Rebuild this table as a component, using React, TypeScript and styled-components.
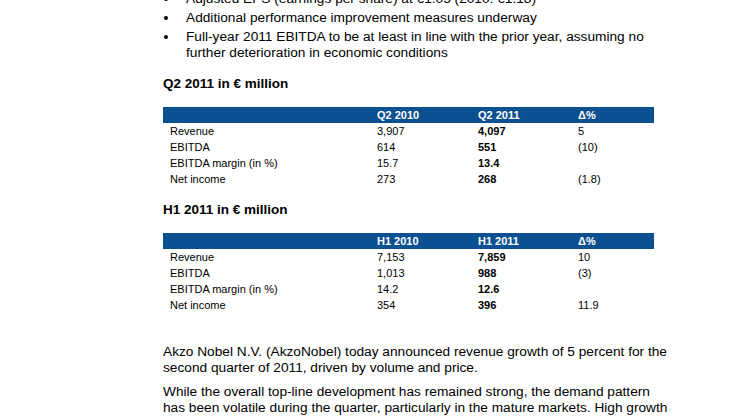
import React from "react"
import styled, { createGlobalStyle } from "styled-components"

type TRow = {
    label: string
    prev: string
    cur: string
    delta: string
}

type TTableProps = {
    heads: [string, string]
    rows: TRow[]
}

const q2: TRow[] = [
    { label: "Revenue", prev: "3,907", cur: "4,097", delta: "5" },
    { label: "EBITDA", prev: "614", cur: "551", delta: "(10)" },
    { label: "EBITDA margin (in %)", prev: "15.7", cur: "13.4", delta: "" },
    { label: "Net income", prev: "273", cur: "268", delta: "(1.8)" },
]

const h1: TRow[] = [
    { label: "Revenue", prev: "7,153", cur: "7,859", delta: "10" },
    { label: "EBITDA", prev: "1,013", cur: "988", delta: "(3)" },
    { label: "EBITDA margin (in %)", prev: "14.2", cur: "12.6", delta: "" },
    { label: "Net income", prev: "354", cur: "396", delta: "11.9" },
]

const Figures = (props: TTableProps) => (
    <Table>
        <Head>
            <Cell />
            <Cell>{props.heads[0]}</Cell>
            <Cell>{props.heads[1]}</Cell>
            <Cell>Δ%</Cell>
        </Head>
        {props.rows.map(row => (
            <Row key={row.label}>
                <Cell>{row.label}</Cell>
                <Cell>{row.prev}</Cell>
                <Cell $bold>{row.cur}</Cell>
                <Cell>{row.delta}</Cell>
            </Row>
        ))}
    </Table>
)

export default function App() {
    return (
        <>
            <Global />
            <Page>
                <Bullets>
                    <li>Adjusted EPS (earnings per share) at €1.05 (2010: €1.18)</li>
                    <li>Additional performance improvement measures underway</li>
                    <li>Full-year 2011 EBITDA to be at least in line with the prior year, assuming no further deterioration in economic conditions</li>
                </Bullets>
                <Title>Q2 2011 in € million</Title>
                <Figures heads={["Q2 2010", "Q2 2011"]} rows={q2} />
                <Title>H1 2011 in € million</Title>
                <Figures heads={["H1 2010", "H1 2011"]} rows={h1} />
                <Para $top={31}>
                    Akzo Nobel N.V. (AkzoNobel) today announced revenue growth of 5 percent for the second quarter of 2011, driven by volume and price.
                </Para>
                <Para $top={8}>
                    While the overall top-line development has remained strong, the demand pattern has been volatile during the quarter, particularly in the mature markets. High growth markets continued to perform well.
                </Para>
            </Page>
        </>
    )
}

const Global = createGlobalStyle`
    html, body {
        margin: 0;
        background: #ffffff;
        overflow: hidden;
    }
`

const Page = styled.div`
    width: 508px;
    height: 419px;
    overflow: hidden;
    padding-left: 163px;
    font-family: "Liberation Sans", Arial, sans-serif;
    color: #000;
`

const Bullets = styled.ul`
    margin: -9px 0 0;
    padding: 0;
    width: 491px;
    list-style: none;
    display: flex;
    flex-direction: column;
    gap: 3px;
    font-size: 13.7px;
    line-height: 16px;

    li {
        position: relative;
        padding-left: 23px;
    }

    li::before {
        content: "";
        position: absolute;
        left: 1px;
        top: 6px;
        width: 4px;
        height: 4px;
        border-radius: 50%;
        background: #000;
    }
`

const Title = styled.div`
    margin-top: 15px;
    font-size: 13.5px;
    line-height: 16px;
    font-weight: 700;
`

const Table = styled.div`
    margin-top: 15px;
    width: 491px;
    font-size: 11px;
`

const Head = styled.div`
    display: grid;
    grid-template-columns: 207px 101px 100px 1fr;
    height: 16px;
    align-items: center;
    padding-left: 7px;
    background: #0b5091;
    color: #fff;
    font-weight: 700;
`

const Row = styled.div`
    display: grid;
    grid-template-columns: 207px 101px 100px 1fr;
    height: 16px;
    align-items: center;
    padding-left: 7px;
`

const Cell = styled.div<{ $bold?: boolean }>`
    font-weight: ${p => (p.$bold ? 700 : "inherit")};
    white-space: nowrap;
`

const Para = styled.p<{ $top: number }>`
    margin: ${p => p.$top}px 0 0;
    font-size: 13.7px;
    line-height: 16px;
`
